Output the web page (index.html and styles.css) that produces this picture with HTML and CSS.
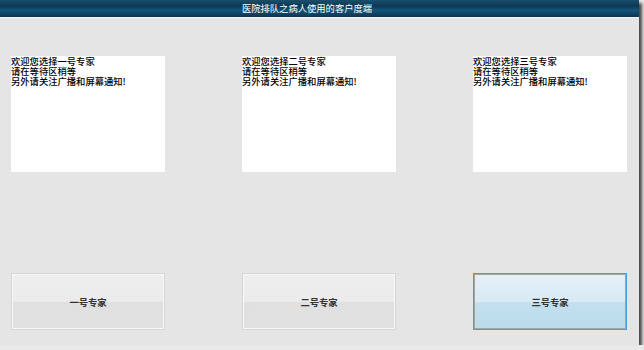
FILE: index.html
```html
<!DOCTYPE html>
<html lang="zh">
<head>
    <meta charset="UTF-8">
    <title>医院排队之病人使用的客户度端</title>
    <link rel="stylesheet" href="styles.css">
</head>
<body>
    <div class="window">
        <div class="title-bar">医院排队之病人使用的客户度端</div>
        <div class="content">
            <div class="notes">
                <div class="note">欢迎您选择一号专家<br>请在等待区稍等<br>另外请关注广播和屏幕通知!</div>
                <div class="note">欢迎您选择二号专家<br>请在等待区稍等<br>另外请关注广播和屏幕通知!</div>
                <div class="note">欢迎您选择三号专家<br>请在等待区稍等<br>另外请关注广播和屏幕通知!</div>
            </div>
            <div class="buttons">
                <button class="expert-button">一号专家</button>
                <button class="expert-button">二号专家</button>
                <button class="expert-button focused">三号专家</button>
            </div>
        </div>
    </div>
</body>
</html>
```

FILE: styles.css
```css
body {
    margin: 0;
    background: #e9e9e9;
    font-family: "Noto Sans CJK SC", "DejaVu Sans", sans-serif;
}

.window {
    width: 639px;
    height: 345px;
    background: #e5e5e5;
    box-shadow: 3px 3px 3px rgba(0, 0, 0, 0.7);
    display: flex;
    flex-direction: column;
}

.title-bar {
    height: 17px;
    line-height: 17px;
    padding-right: 25px;
    text-align: center;
    color: #fff;
    font-size: 9.3px;
    background: linear-gradient(#1a4f6c 0%, #0c3854 35%, #145478 60%, #0a3452 100%);
    border-bottom: 1px solid #f4f4f4;
}

.content {
    flex: 1;
    padding: 38px 12px 0 11px;
}

.notes,
.buttons {
    display: grid;
    grid-template-columns: repeat(3, 154px);
    column-gap: 77px;
}

.note {
    height: 116px;
    background: #fff;
    color: #000;
    font-size: 9.3px;
    line-height: 10px;
    font-weight: 500;
}

.buttons {
    margin-top: 101px;
}

.expert-button {
    height: 57px;
    padding: 0;
    font-family: inherit;
    font-size: 9.3px;
    font-weight: bold;
    color: #333;
    border: 1px solid #d6d6d6;
    box-shadow: inset 0 0 0 1px #f7f7f7;
    background: linear-gradient(#efefef 0%, #ebebeb 50%, #e0e0e0 51%, #e1e1e1 100%);
}

.expert-button.focused {
    border: 1px solid #3aa6df;
    box-shadow: inset 0 0 0 1px #9fa5a8;
    background: linear-gradient(#e4f0f8 0%, #d8eaf5 50%, #c2e0ee 51%, #bcdcea 100%);
}
```
